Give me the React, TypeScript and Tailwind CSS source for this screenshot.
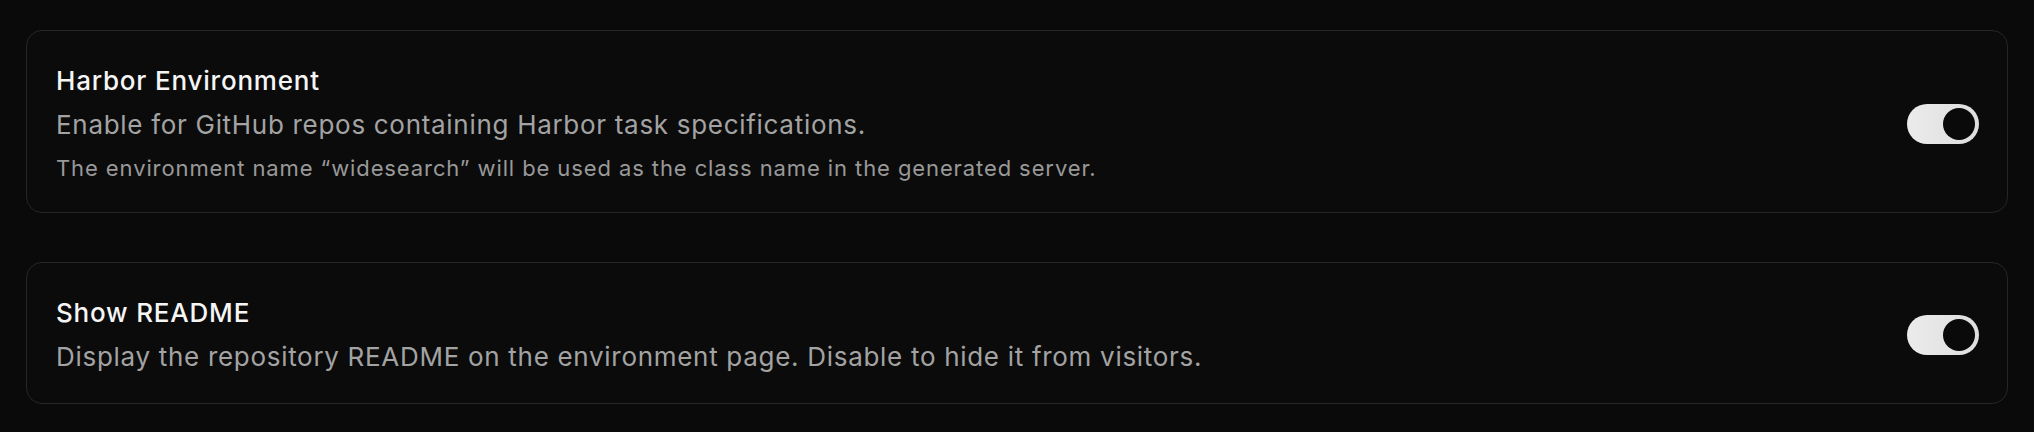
import React, { useState } from 'react';

type Setting = {
  id: string;
  title: string;
  description: string;
  note?: string;
};

const settings: Setting[] = [
  {
    id: 'harbor',
    title: 'Harbor Environment',
    description: 'Enable for GitHub repos containing Harbor task specifications.',
    note: 'The environment name \u201cwidesearch\u201d will be used as the class name in the generated server.',
  },
  {
    id: 'readme',
    title: 'Show README',
    description: 'Display the repository README on the environment page. Disable to hide it from visitors.',
  },
];

function Toggle({ on, onChange }: { on: boolean; onChange: () => void }) {
  return (
    <button
      type="button"
      role="switch"
      aria-checked={on}
      onClick={onChange}
      className={`relative w-[72px] h-[40px] shrink-0 rounded-full p-[4px] flex items-center transition-colors ${
        on ? 'bg-gradient-to-r from-[#ebebeb] to-[#dedede] justify-end' : 'bg-[#2a2a2a] justify-start'
      }`}
    >
      <span className="block w-[32px] h-[32px] rounded-full bg-[#0a0a0a]" />
    </button>
  );
}

export default function App() {
  const [enabled, setEnabled] = useState<Record<string, boolean>>({ harbor: true, readme: true });

  return (
    <div
      className="min-h-screen bg-[#0a0a0a] px-[26px] pt-[30px] pb-[27px] flex flex-col gap-[49px]"
      style={{ fontFamily: 'Inter, "Noto Sans", sans-serif' }}
    >
      {settings.map((s) => (
        <div
          key={s.id}
          className="bg-[#0b0b0b] border border-[#262626] rounded-[16px] pl-[29px] pr-[28px] pt-[34px] pb-[30px] flex items-center justify-between"
        >
          <div className="flex flex-col">
            <h3 className="text-[26px] leading-[32px] font-medium tracking-[0.8px] text-[#f5f5f5]">{s.title}</h3>
            <p className="mt-[12px] text-[26px] leading-[32px] tracking-[0.7px] text-[#a3a3a3]">{s.description}</p>
            {s.note && (
              <p className="mt-[13px] text-[22px] leading-[28px] tracking-[0.9px] text-[#999999]">{s.note}</p>
            )}
          </div>
          <Toggle on={enabled[s.id]} onChange={() => setEnabled({ ...enabled, [s.id]: !enabled[s.id] })} />
        </div>
      ))}
    </div>
  );
}
